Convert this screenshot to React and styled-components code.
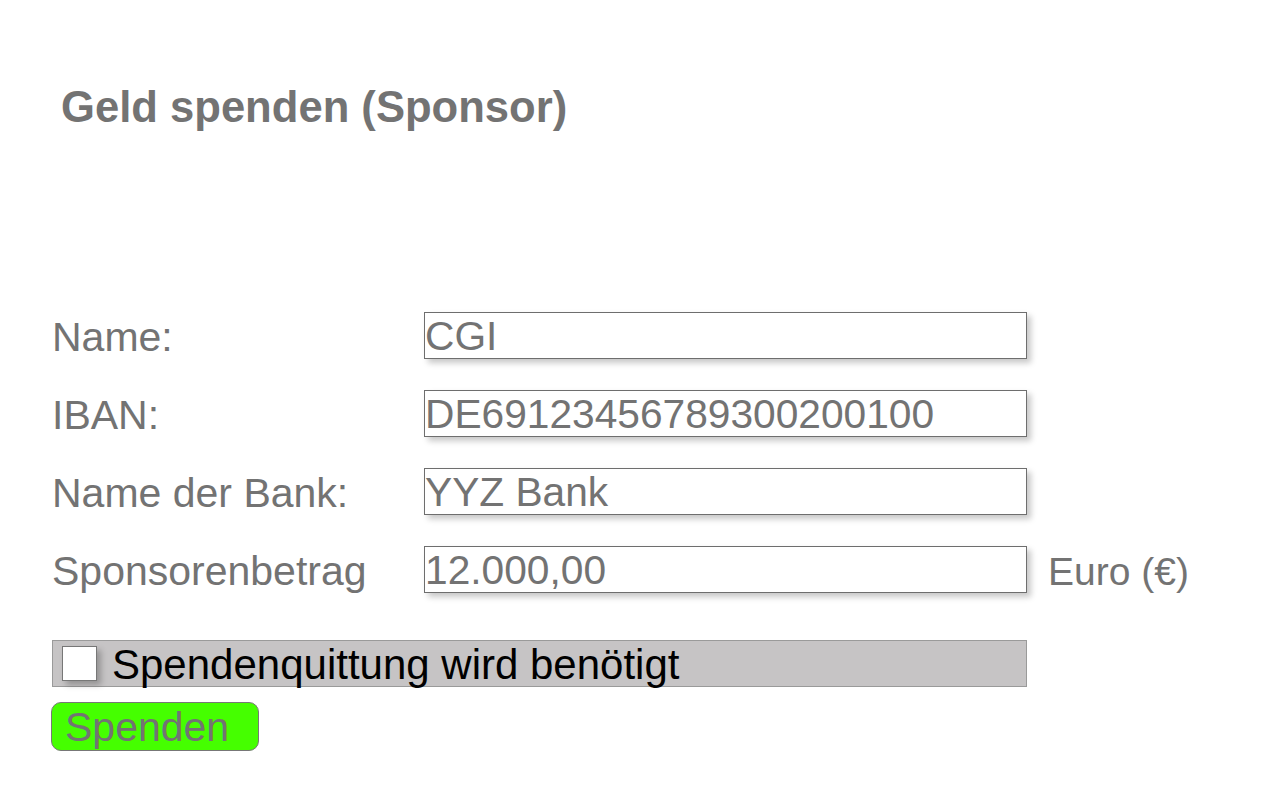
import React, { useState } from 'react'
import styled, { createGlobalStyle } from "styled-components"

const GlobalStyle = createGlobalStyle`
body {
    margin: 0;
    background: #ffffff;
    font-family: "Liberation Sans", Arial, Helvetica, sans-serif;
}
`

const Page = styled.div`
width: 1280px;
height: 800px;
box-sizing: border-box;
padding: 82px 0 0 52px;
color: #737373;
`

const Title = styled.h1`
margin: 0 0 0 9px;
font-size: 43.6px;
line-height: 50px;
font-weight: bold;
color: #737373;
`

const Form = styled.form`
margin-top: 180px;
display: flex;
flex-direction: column;
`

const Fields = styled.div`
display: grid;
grid-template-columns: 372px 603px auto;
row-gap: 31px;
align-items: start;
`

const Label = styled.label`
font-size: 41px;
line-height: 47px;
padding-top: 2px;
height: 47px;
box-sizing: border-box;
white-space: nowrap;
`

const Field = styled.input`
width: 603px;
height: 47px;
box-sizing: border-box;
margin: 0;
padding: 2px 0 0 0;
border: 1px solid #6e6e6e;
border-radius: 0;
background: #ffffff;
box-shadow: 4px 4px 6px rgba(0, 0, 0, 0.22);
font-family: "Liberation Sans", Arial, Helvetica, sans-serif;
font-size: 40.7px;
line-height: 43px;
color: #737373;
outline: none;
`

const Unit = styled.span`
font-size: 39px;
line-height: 47px;
padding: 2px 0 0 21px;
height: 47px;
box-sizing: border-box;
white-space: nowrap;
`

const ReceiptRow = styled.label`
margin-top: 47px;
width: 975px;
height: 47px;
box-sizing: border-box;
display: flex;
align-items: center;
gap: 15px;
padding-left: 9px;
background: #c6c4c5;
border: 1px solid #9a9a9a;
color: #000000;
font-size: 42px;
line-height: 47px;
cursor: pointer;
`

const Box = styled.span`
flex: none;
width: 35px;
height: 35px;
box-sizing: border-box;
background: #ffffff;
border: 1px solid #777777;
box-shadow: 4px 4px 6px rgba(0, 0, 0, 0.25);
display: flex;
align-items: center;
justify-content: center;
font-size: 28px;
line-height: 1;
color: #333;
`

const ReceiptText = styled.span`
padding-top: 2px;
white-space: nowrap;
`

const Button = styled.button`
margin: 15px 0 0 -1px;
width: 208px;
height: 49px;
box-sizing: border-box;
padding: 2px 0 0 13px;
text-align: left;
background: #45ff00;
border: 1px solid #777777;
border-radius: 10px;
font-family: "Liberation Sans", Arial, Helvetica, sans-serif;
font-size: 41px;
line-height: 45px;
color: #737373;
cursor: pointer;
`

const fields = [
    { id: "name", label: "Name:", value: "CGI" },
    { id: "iban", label: "IBAN:", value: "DE69123456789300200100" },
    { id: "bank", label: "Name der Bank:", value: "YYZ Bank" },
    { id: "amount", label: "Sponsorenbetrag", value: "12.000,00", unit: "Euro (€)" },
]

function App() {
    const [values, setValues] = useState(() => Object.fromEntries(fields.map(f => [f.id, f.value])))
    const [receipt, setReceipt] = useState(false)

    return (
        <>
            <GlobalStyle />
            <Page>
                <Title>Geld spenden (Sponsor)</Title>
                <Form onSubmit={e => e.preventDefault()}>
                    <Fields>
                        {fields.map(f => (
                            <React.Fragment key={f.id}>
                                <Label htmlFor={f.id}>{f.label}</Label>
                                <Field
                                    id={f.id}
                                    value={values[f.id]}
                                    onChange={e => setValues({ ...values, [f.id]: e.target.value })}
                                />
                                {f.unit ? <Unit>{f.unit}</Unit> : <span />}
                            </React.Fragment>
                        ))}
                    </Fields>
                    <ReceiptRow onClick={() => setReceipt(!receipt)}>
                        <Box>{receipt ? "✓" : ""}</Box>
                        <ReceiptText>Spendenquittung wird benötigt</ReceiptText>
                    </ReceiptRow>
                    <div>
                        <Button type="submit">Spenden</Button>
                    </div>
                </Form>
            </Page>
        </>
    )
}

export default App;
